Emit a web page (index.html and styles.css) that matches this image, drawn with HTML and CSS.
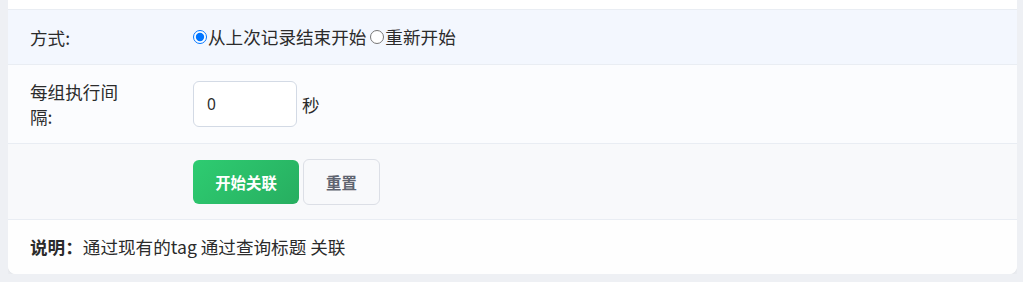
FILE: index.html
```html
<!DOCTYPE html>
<html lang="zh-CN">
<head>
  <meta charset="UTF-8">
  <title>关联设置</title>
  <link rel="stylesheet" href="styles.css">
</head>
<body>

  <div class="card">
    <div class="row row-top"></div>

    <div class="row row-mode">
      <div class="label">方式:</div>
      <div class="field">
        <label class="radio"><input type="radio" name="mode" checked>从上次记录结束开始</label>
        <label class="radio"><input type="radio" name="mode">重新开始</label>
      </div>
    </div>

    <div class="row row-interval">
      <div class="label">每组执行间隔:</div>
      <div class="field">
        <input class="num" type="text" value="0">
        <span class="unit">秒</span>
      </div>
    </div>

    <div class="row row-actions">
      <div class="label"></div>
      <div class="field">
        <button class="btn btn-start">开始关联</button>
        <button class="btn btn-reset">重置</button>
      </div>
    </div>

    <div class="row row-note">
      <b>说明：</b>通过现有的tag 通过查询标题 关联
    </div>
  </div>

</body>
</html>
```

FILE: styles.css
```css
body {
  margin: 0 6px 8px 8px;
  background-color: #eef0f4;
  font-family: "Noto Sans CJK SC", "Noto Sans", sans-serif;
  font-size: 17.6px;
  color: #2b2b2b;
}
.card {
  background: #fff;
  border-radius: 0 0 8px 8px;
  box-shadow: 0 2px 6px rgba(0, 0, 0, 0.06);
  overflow: hidden;
}
.row {
  display: flex;
  align-items: center;
  padding: 0 22px;
  border-bottom: 1px solid #e9edf3;
}
.row-top {
  height: 9px;
  background: #fff;
}
.label {
  width: 100px;
  margin-right: 63px;
  line-height: 25px;
}
.field {
  display: flex;
  align-items: center;
}
.row-mode {
  height: 54px;
  background: #f3f7fe;
}
.radio {
  display: flex;
  align-items: center;
  line-height: 24px;
  margin-right: 4px;
}
.radio input {
  width: 14px;
  height: 14px;
  margin: 0 1px 0 0;
}
.row-interval {
  height: 78px;
  background: #fbfcfe;
}
.num {
  box-sizing: border-box;
  width: 104px;
  height: 46px;
  padding: 0 13px;
  border: 1px solid #d3dae5;
  border-radius: 6px;
  background: #fff;
  font-family: "Noto Sans", sans-serif;
  font-size: 15.5px;
  color: #2b2b2b;
  outline: none;
}
.unit {
  margin-left: 5px;
}
.row-actions {
  height: 75px;
  background: #f8f9fb;
}
.btn {
  box-sizing: border-box;
  font-family: "Noto Sans CJK SC", sans-serif;
  font-size: 15.4px;
  font-weight: bold;
  border-radius: 6px;
  cursor: pointer;
}
.btn-start {
  width: 106px;
  height: 44px;
  border: none;
  color: #fff;
  background: linear-gradient(135deg, #2ecc71, #27ae60);
}
.btn-reset {
  width: 77px;
  height: 46px;
  margin-left: 4px;
  border: 1px solid #dcdfe6;
  background: #f8f9fb;
  color: #5f6470;
}
.row-note {
  height: 54px;
  border-bottom: none;
  background: #fefefe;
  line-height: 24px;
}
.row-note b {
  font-weight: bold;
}
```
